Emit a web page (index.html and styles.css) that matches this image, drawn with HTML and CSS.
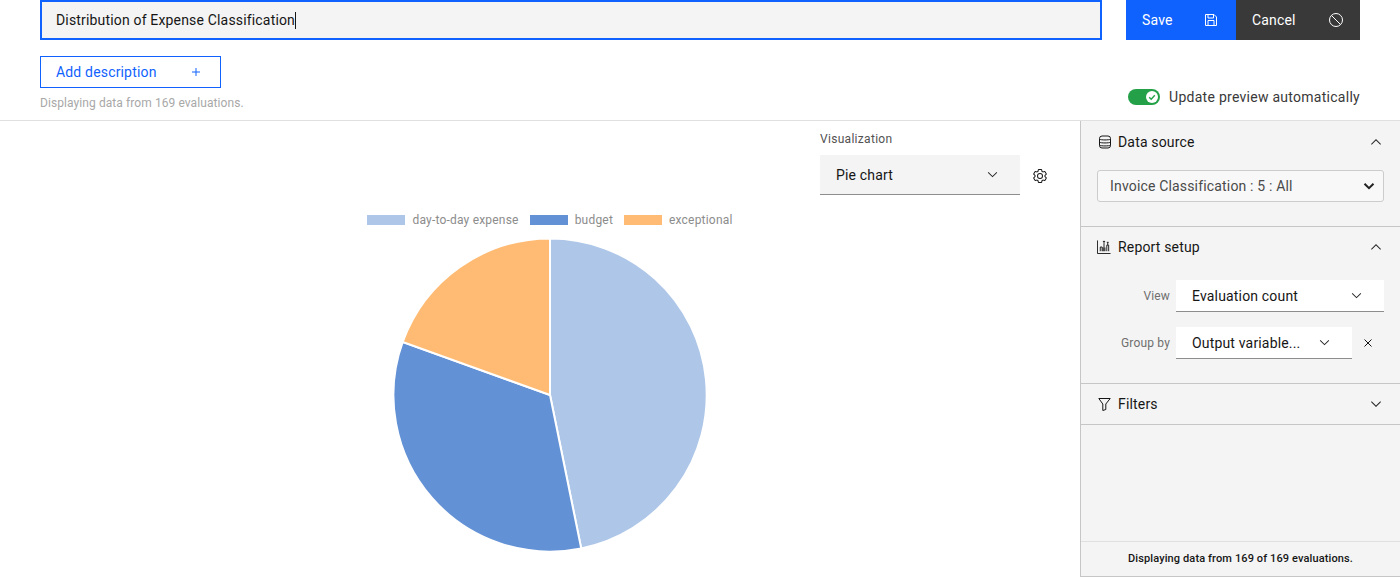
FILE: index.html
```html
<!DOCTYPE html>
<html lang="en">
<head>
  <meta charset="UTF-8">
  <title>Distribution of Expense Classification</title>
  <link rel="stylesheet" href="styles.css">
</head>
<body>
  <header class="top">
    <div class="title-row">
      <div class="title-input">Distribution of Expense Classification<span class="caret"></span></div>
      <div class="actions">
        <button class="btn btn-save">Save
          <svg width="16" height="16" viewBox="0 0 16 16" fill="none" stroke="currentColor"><path d="M2.500 2.500h8.500l2.500 2.500v8.500h-11z"/><path d="M5 2.500v3.500h5.500v-3.500M5 13.500v-5h6v5"/></svg>
        </button>
        <button class="btn btn-cancel">Cancel
          <svg width="16" height="16" viewBox="0 0 16 16" fill="none" stroke="currentColor"><circle cx="8" cy="8" r="6.500"/><path d="M3.500 3.500l9 9"/></svg>
        </button>
      </div>
    </div>
    <div class="sub-row">
      <div>
        <button class="add-desc">Add description
          <svg width="10" height="10" viewBox="0 0 10 10" stroke="currentColor"><path d="M5 1v8M1 5h8"/></svg>
        </button>
        <p class="eval-note">Displaying data from 169 evaluations.</p>
      </div>
      <div class="auto-update">
        <span class="toggle"><span class="toggle-knob"><svg width="8" height="8" viewBox="0 0 8 8" fill="none" stroke="#24a148" stroke-width="1.4"><path d="M1.200 4.200l2 2 3.600-4"/></svg></span></span>
        Update preview automatically
      </div>
    </div>
  </header>

  <main class="content">
    <section class="preview">
      <div class="viz-controls">
        <div class="viz-field">
          <label class="viz-label">Visualization</label>
          <div class="dropdown dropdown-grey">Pie chart
            <svg class="chev" width="15" height="15" viewBox="0 0 16 16"><path d="M8 11L3 6l.7-.7L8 9.600l4.300-4.300.7.7z"/></svg>
          </div>
        </div>
        <svg class="gear" width="16" height="16" viewBox="0 0 32 32" fill="#161616"><path d="M27,16.76c0-.25,0-.5,0-.76s0-.51,0-.77l1.92-1.68A2,2,0,0,0,29.3,11L26.94,7a2,2,0,0,0-1.73-1,2,2,0,0,0-.64.1l-2.43.82a11.35,11.35,0,0,0-1.31-.75l-.51-2.52a2,2,0,0,0-2-1.61H13.64a2,2,0,0,0-2,1.61l-.51,2.52a11.48,11.48,0,0,0-1.32.75L7.43,6.06A2,2,0,0,0,6.79,6,2,2,0,0,0,5.06,7L2.7,11a2,2,0,0,0,.41,2.51L5,15.24c0,.25,0,.5,0,.76s0,.51,0,.77L3.11,18.45A2,2,0,0,0,2.7,21L5.06,25a2,2,0,0,0,1.73,1,2,2,0,0,0,.64-.1l2.43-.82a11.35,11.35,0,0,0,1.31.75l.51,2.52a2,2,0,0,0,2,1.61h4.72a2,2,0,0,0,2-1.61l.51-2.52a11.48,11.48,0,0,0,1.32-.75l2.42.82a2,2,0,0,0,.64.1,2,2,0,0,0,1.73-1L29.3,21a2,2,0,0,0-.41-2.51ZM25.21,24l-3.43-1.16a8.86,8.86,0,0,1-2.71,1.57L18.36,28H13.64l-.71-3.55a9.36,9.36,0,0,1-2.7-1.57L6.79,24,4.43,20l2.72-2.4a8.9,8.9,0,0,1,0-3.13L4.43,12,6.79,8l3.43,1.16a8.86,8.86,0,0,1,2.71-1.57L13.64,4h4.72l.71,3.55a9.36,9.36,0,0,1,2.7,1.57L25.21,8,27.57,12l-2.72,2.4a8.9,8.9,0,0,1,0,3.13L27.57,20Z"/><path d="M16,22a6,6,0,1,1,6-6A5.94,5.94,0,0,1,16,22Zm0-10a3.91,3.91,0,0,0-4,4,3.91,3.91,0,0,0,4,4,3.91,3.91,0,0,0,4-4A3.91,3.91,0,0,0,16,12Z"/></svg>
      </div>

      <div class="chart">
        <div class="legend">
          <span class="legend-item"><i class="swatch swatch-a"></i>day-to-day expense</span>
          <span class="legend-item"><i class="swatch swatch-b"></i>budget</span>
          <span class="legend-item"><i class="swatch swatch-c"></i>exceptional</span>
        </div>
        <svg class="pie" width="316" height="316" viewBox="0 0 316 316" stroke="#fff" stroke-width="2">
          <path fill="#aec7e8" d="M158 158V1.500A156.500 156.500 0 0 1 189.200 311.400z"/>
          <path fill="#6391d5" d="M158 158L189.200 311.400A156.500 156.500 0 0 1 10.700 105z"/>
          <path fill="#ffbb73" d="M158 158L10.700 105A156.500 156.500 0 0 1 158 1.500z"/>
        </svg>
      </div>
    </section>

    <aside class="side">
      <section class="panel panel-source">
        <div class="panel-head">
          <svg width="14" height="14" viewBox="0 0 14 14" fill="none" stroke="#161616"><rect x="2.500" y="1" width="11" height="12" rx="2.500"/><path d="M2.500 4.200c1.500 1 9.500 1 11 0M2.500 7.200c1.500 1 9.500 1 11 0M2.500 10.200c1.500 1 9.500 1 11 0"/></svg>
          <h2>Data source</h2>
          <svg class="chev" width="16" height="16" viewBox="0 0 16 16"><path d="M8 5l5 5-.7.7L8 6.400l-4.300 4.300L3 10z"/></svg>
        </div>
        <div class="source-select">Invoice Classification : 5 : All
          <svg width="12" height="12" viewBox="0 0 12 12" fill="none" stroke="#222" stroke-width="2"><path d="M1.500 3.800L6 8.200l4.500-4.400"/></svg>
        </div>
      </section>

      <section class="panel panel-report">
        <div class="panel-head">
          <svg width="14" height="14" viewBox="0 0 15 15" fill="none" stroke="#161616"><path d="M.5 .5v14h14"/><path d="M3.500 12V7.500h2V12M7.500 12V4M6.300 1.500h2.400M7.500 1.500V4M6.500 12V8M8.500 12V8M10.500 12V5.500h2V12M11.500 5.500V2.500M10.500 2.500h2"/></svg>
          <h2>Report setup</h2>
          <svg class="chev" width="16" height="16" viewBox="0 0 16 16"><path d="M8 5l5 5-.7.7L8 6.400l-4.300 4.300L3 10z"/></svg>
        </div>
        <div class="setup-row">
          <label>View</label>
          <div class="dropdown dropdown-white dropdown-view">Evaluation count
            <svg class="chev" width="15" height="15" viewBox="0 0 16 16"><path d="M8 11L3 6l.7-.7L8 9.600l4.300-4.300.7.7z"/></svg>
          </div>
        </div>
        <div class="setup-row">
          <label>Group by</label>
          <div class="dropdown dropdown-white dropdown-group">Output variable...
            <svg class="chev" width="15" height="15" viewBox="0 0 16 16"><path d="M8 11L3 6l.7-.7L8 9.600l4.300-4.300.7.7z"/></svg>
          </div>
          <svg class="clear" width="10" height="10" viewBox="0 0 10 10" stroke="#161616"><path d="M1.500 1.500l7 7M8.500 1.500l-7 7"/></svg>
        </div>
      </section>

      <section class="panel panel-filters">
        <div class="panel-head">
          <svg width="14" height="14" viewBox="0 0 14 14" fill="none" stroke="#161616"><path d="M1.800 1.500h11.400L8.800 7v5.500l-3 1V7z"/></svg>
          <h2>Filters</h2>
          <svg class="chev" width="16" height="16" viewBox="0 0 16 16"><path d="M8 11L3 6l.7-.7L8 9.600l4.300-4.300.7.7z"/></svg>
        </div>
      </section>

      <footer class="side-foot">Displaying data from 169 of 169 evaluations.</footer>
    </aside>
  </main>
</body>
</html>
```
FILE: styles.css
```css
* {
  box-sizing: border-box;
}

html, body {
  height: 100%;
}

body {
  margin: 0;
  overflow: hidden;
  background: #fff;
  color: #161616;
  font-family: Roboto, "Noto Sans", sans-serif;
  font-size: 14px;
  letter-spacing: 0.17px;
}

button {
  font: inherit;
  letter-spacing: inherit;
  cursor: pointer;
}

.chev {
  fill: #262626;
}

/* Header */
.top {
  height: 121px;
  padding-left: 40px;
  padding-right: 40px;
  border-bottom: 1px solid #e0e0e0;
}

.title-row {
  display: flex;
  gap: 24px;
}

.title-input {
  flex: 1;
  display: flex;
  align-items: center;
  height: 40px;
  padding: 0 14px;
  background: #f4f4f4;
  border: 2px solid #0f62fe;
}

.caret {
  width: 1px;
  height: 17px;
  background: #161616;
}

.actions {
  display: flex;
}

.btn {
  display: flex;
  align-items: center;
  justify-content: space-between;
  height: 40px;
  padding: 0 16px;
  border: none;
  color: #fff;
}

.btn-save {
  width: 110px;
  padding-right: 17px;
  background: #0f62fe;
}

.btn-cancel {
  width: 124px;
  background: #393939;
}

.sub-row {
  display: flex;
  justify-content: space-between;
  align-items: flex-end;
  margin-top: 16px;
}

.add-desc {
  display: flex;
  align-items: center;
  justify-content: space-between;
  width: 181px;
  height: 32px;
  padding: 0 19px 0 15px;
  background: #fff;
  border: 1px solid #0f62fe;
  color: #0f62fe;
}

.eval-note {
  margin: 7px 0 0;
  font-size: 12px;
  line-height: 16px;
  letter-spacing: 0.08px;
  color: #a8a8a8;
}

.auto-update {
  display: flex;
  align-items: center;
  gap: 9px;
  height: 18px;
  margin-bottom: 5px;
  letter-spacing: 0.27px;
  color: #393939;
}

.toggle {
  display: flex;
  justify-content: flex-end;
  align-items: center;
  width: 32px;
  height: 16px;
  padding-right: 2px;
  border-radius: 8px;
  background: #24a148;
}

.toggle-knob {
  display: flex;
  align-items: center;
  justify-content: center;
  width: 12px;
  height: 12px;
  border-radius: 50%;
  background: #fff;
}

/* Main area */
.content {
  display: flex;
  height: 456px;
}

.preview {
  position: relative;
  flex: 1;
  min-width: 0;
}

.viz-controls {
  position: absolute;
  top: 10px;
  left: 820px;
  display: flex;
  align-items: flex-end;
}

.viz-label {
  display: block;
  margin-bottom: 8px;
  font-size: 12px;
  line-height: 16px;
  letter-spacing: 0.3px;
  color: #525252;
}

.dropdown {
  display: flex;
  align-items: center;
  justify-content: space-between;
  height: 40px;
  padding: 0 20px 0 16px;
  border-bottom: 1px solid #8d8d8d;
}

.dropdown-grey {
  width: 200px;
  background: #f4f4f4;
}

.dropdown-white {
  height: 32px;
  background: #fff;
}

.dropdown-view {
  width: 208px;
}

.dropdown-group {
  width: 176px;
}

.gear {
  margin: 0 0 11px 12px;
}

.chart {
  display: flex;
  flex-direction: column;
  align-items: center;
  width: 1100px;
  padding-top: 91px;
}

.legend {
  display: flex;
  gap: 11px;
  height: 16px;
  margin-bottom: 9px;
  align-items: center;
  font-size: 12px;
  letter-spacing: 0.2px;
  color: #8c8c8c;
}

.legend-item {
  display: flex;
  align-items: center;
  gap: 7px;
}

.swatch {
  width: 38px;
  height: 10px;
}

.swatch-a { background: #aec7e8; }
.swatch-b { background: #6391d5; }
.swatch-c { background: #ffbb73; }

/* Side panel */
.side {
  display: flex;
  flex-direction: column;
  flex-shrink: 0;
  width: 320px;
  padding-top: 1px;
  background: #f4f4f4;
  border-left: 1px solid #c6c6c6;
  border-bottom: 1px solid #c6c6c6;
}

.panel {
  border-bottom: 1px solid #c6c6c6;
  padding: 0 16px;
}

.panel-source { height: 105px; }
.panel-report { height: 157px; }
.panel-filters { height: 41px; }

.panel-head {
  display: flex;
  align-items: center;
  gap: 7px;
  height: 40px;
}

.panel-head h2 {
  flex: 1;
  margin: 0;
  font-size: 14px;
  font-weight: 400;
}

.source-select {
  display: flex;
  align-items: center;
  justify-content: space-between;
  height: 32px;
  margin-top: 8px;
  padding: 0 8px 0 12px;
  background: #f8f8f8;
  border: 1px solid #ccc;
  border-radius: 3px;
  color: #4a4a4a;
}

.setup-row {
  display: flex;
  align-items: center;
  margin-top: 15px;
}

.panel-head + .setup-row {
  margin-top: 13px;
}

.setup-row label {
  width: 73px;
  margin-right: 6px;
  text-align: right;
  font-size: 12px;
  color: #6f6f6f;
}

.clear {
  margin-left: 11px;
}

.side-foot {
  margin-top: auto;
  height: 35px;
  line-height: 34px;
  text-align: center;
  font-size: 11px;
  font-weight: 500;
  letter-spacing: 0.12px;
  border-top: 1px solid #e0e0e0;
}
```
